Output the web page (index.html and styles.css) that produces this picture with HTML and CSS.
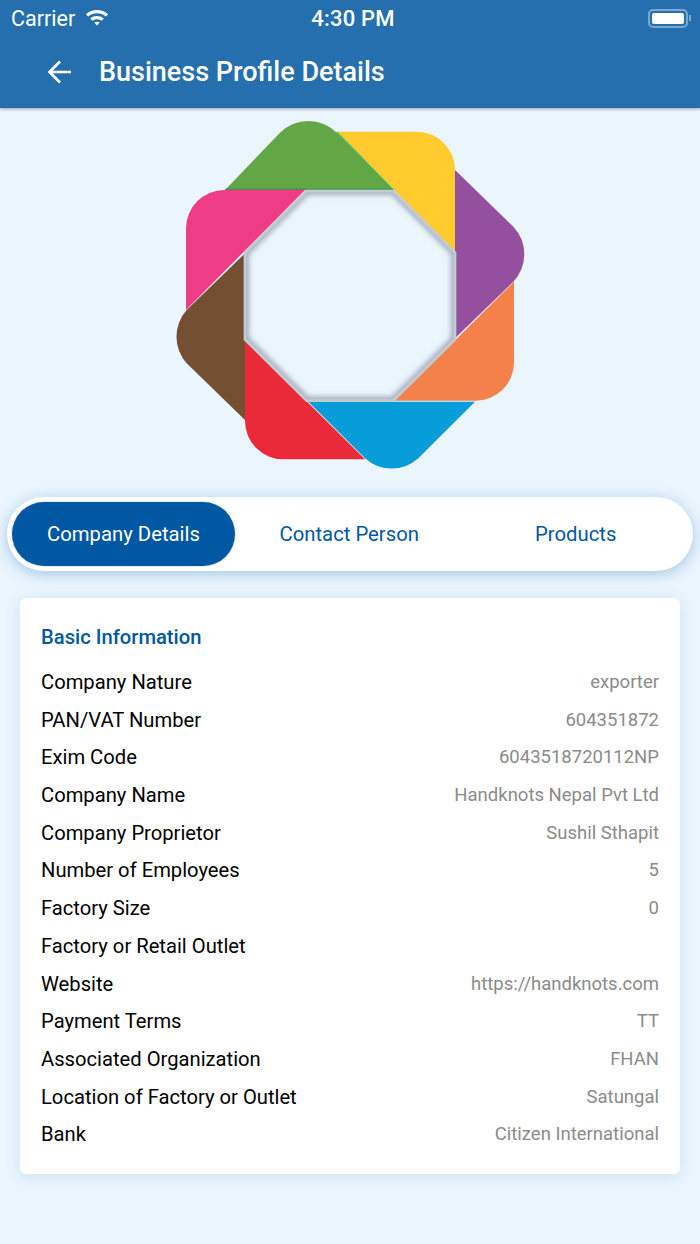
FILE: index.html
```html
<!DOCTYPE html>
<html lang="en">

<head>
  <meta charset="UTF-8" />
  <title>Business Profile Details</title>
  <link rel="stylesheet" href="styles.css">
</head>

<body>
  <header class="top">
    <div class="status">
      <div class="status-left">
        <span>Carrier</span>
        <svg class="wifi" width="24" height="18" viewBox="0 0 24 18">
          <path d="M1 6.200C7.200 .6 16.800 .6 23 6.200l-2.200 2.300C15.800 4.200 8.200 4.200 3.200 8.500z" fill="#fff" />
          <path d="M5.200 10.400c3.900-3.300 9.700-3.300 13.600 0l-2.300 2.300c-2.700-2.100-6.300-2.100-9 0z" fill="#fff" />
          <path d="M9.300 14.600c1.600-1.100 3.800-1.100 5.400 0L12 17.400z" fill="#fff" />
        </svg>
      </div>
      <span class="clock">4:30 PM</span>
      <div class="battery-wrap">
        <div class="battery"><span class="battery-fill"></span></div>
        <span class="battery-nub"></span>
      </div>
    </div>
    <div class="bar">
      <svg class="back" width="28" height="28" viewBox="0 0 28 28">
        <path d="M25 14H4M14 3.500L3.500 14 14 24.500" fill="none" stroke="#fff" stroke-width="2.600" />
      </svg>
      <h1>Business Profile Details</h1>
    </div>
  </header>

  <div class="logo-wrap">
    <svg class="logo" width="370" height="370" viewBox="0 0 1110 1110">
      <defs>
        <filter id="soft" x="-10%" y="-10%" width="120%" height="120%">
          <feGaussianBlur stdDeviation="8" />
        </filter>
        <clipPath id="hole">
          <path d="M425 243H685L870 428V688L685 872H425L240 688V428Z" />
        </clipPath>
      </defs>
      <path d="M515 65H755A115 115 0 0 1 870 180V425Z" fill="#ffcb2d" />
      <path d="M870 180L1045 350A120 120 0 0 1 1045 515L870 685Z" fill="#944f9e" />
      <path d="M1047 515V757A115 115 0 0 1 932 872H688Z" fill="#f5814a" />
      <path d="M930 875L760 1045A120 120 0 0 1 600 1045L430 875Z" fill="#079dd9" />
      <path d="M600 1048H355A115 115 0 0 1 240 933V690Z" fill="#ea2a38" />
      <path d="M240 930L65 760A120 120 0 0 1 65 600L240 430Z" fill="#754f32" />
      <path d="M63 600V355A115 115 0 0 1 178 240H420Z" fill="#ee3c86" />
      <path d="M180 240L345 68A120 120 0 0 1 515 68L685 240Z" fill="#63a646" />
      <path d="M180 238H420" stroke="#d81f78" stroke-width="4" opacity=".5" />
      <path d="M515 66L683 238H180" fill="none" stroke="#12a84a" stroke-width="4" opacity=".7" />
      <g clip-path="url(#hole)">
        <path d="M425 243H685L870 428V688L685 872H425L240 688V428Z" fill="#eaf5fe" />
        <path d="M425 243H685L870 428V688L685 872H425L240 688V428Z" fill="none" stroke="#a8b3bf" stroke-width="26" filter="url(#soft)" />
      </g>
      <path d="M425 243H685L870 428V688L685 872H425L240 688V428Z" fill="none" stroke="#c3cad1" stroke-width="8" />
    </svg>
  </div>

  <nav class="tabs">
    <a class="tab tab-on" href="#">Company Details</a>
    <a class="tab" href="#">Contact Person</a>
    <a class="tab" href="#">Products</a>
  </nav>

  <section class="card">
    <h2>Basic Information</h2>
    <ul class="rows">
      <li><span>Company Nature</span><em>exporter</em></li>
      <li><span>PAN/VAT Number</span><em>604351872</em></li>
      <li><span>Exim Code</span><em>6043518720112NP</em></li>
      <li><span>Company Name</span><em>Handknots Nepal Pvt Ltd</em></li>
      <li><span>Company Proprietor</span><em>Sushil Sthapit</em></li>
      <li><span>Number of Employees</span><em>5</em></li>
      <li><span>Factory Size</span><em>0</em></li>
      <li><span>Factory or Retail Outlet</span><em></em></li>
      <li><span>Website</span><em>https://handknots.com</em></li>
      <li><span>Payment Terms</span><em>TT</em></li>
      <li><span>Associated Organization</span><em>FHAN</em></li>
      <li><span>Location of Factory or Outlet</span><em>Satungal</em></li>
      <li><span>Bank</span><em>Citizen International</em></li>
    </ul>
  </section>
</body>

</html>
```

FILE: styles.css
```css
* {
  margin: 0;
  padding: 0;
  box-sizing: border-box;
}

ul,
li {
  list-style: none;
}

body {
  width: 700px;
  height: 1244px;
  overflow: hidden;
  background-color: #eaf5fe;
  font-family: Roboto, "Liberation Sans", sans-serif;
}

.top {
  height: 108px;
  background-color: #256fae;
  box-shadow: 0 1px 3px rgba(0, 0, 0, .35);
  color: #fff;
}

.status {
  height: 36px;
  padding: 0 9px 0 11px;
  display: flex;
  align-items: center;
  justify-content: space-between;
  font-size: 21.500px;
  position: relative;
}

.status-left {
  display: flex;
  align-items: center;
  gap: 10px;
}

.wifi {
  margin-bottom: 3px;
}

.clock {
  position: absolute;
  left: 6px;
  right: 0;
  text-align: center;
  font-size: 22px;
  font-weight: 500;
  letter-spacing: .2px;
}

.battery-wrap {
  display: flex;
  align-items: center;
  gap: 1px;
}

.battery {
  width: 40px;
  height: 19px;
  padding: 2px;
  border: 2px solid rgba(255, 255, 255, .4);
  border-radius: 5px;
}

.battery-fill {
  display: block;
  height: 100%;
  background-color: #fff;
  border-radius: 2px;
}

.battery-nub {
  width: 2px;
  height: 6px;
  background-color: rgba(255, 255, 255, .4);
}

.bar {
  height: 72px;
  padding-left: 46px;
  display: flex;
  align-items: center;
  gap: 25px;
}

.bar h1 {
  font-size: 27px;
  font-weight: 500;
}

.logo-wrap {
  height: 372px;
  padding-top: 2px;
  display: flex;
  justify-content: center;
}

.tabs {
  width: 686px;
  height: 74px;
  margin: 17px 7px 0;
  padding: 5px;
  display: flex;
  gap: 2px;
  background-color: #fff;
  border-radius: 37px;
  box-shadow: 0 3px 14px rgba(37, 111, 174, .35);
}

.tab {
  flex: 1;
  display: flex;
  align-items: center;
  justify-content: center;
  border-radius: 32px;
  color: #0058a3;
  font-size: 20.300px;
  text-decoration: none;
}

.tab-on {
  flex: 0 0 223px;
  background-color: #0058a3;
  box-shadow: 0 0 0 1px #e4edf5;
  color: #fff;
}

.card {
  width: 660px;
  height: 576px;
  margin: 27px 20px 0;
  padding: 26px 21px 0;
  background-color: #fff;
  border-radius: 6px;
  box-shadow: 0 2px 16px rgba(37, 111, 174, .12);
}

.card h2 {
  height: 26px;
  line-height: 26px;
  color: #0058a3;
  font-size: 20.200px;
  font-weight: 500;
}

.rows {
  margin-top: 13px;
}

.rows li {
  height: 37.730px;
  display: flex;
  align-items: center;
  justify-content: space-between;
  font-size: 20.200px;
  color: #000;
}

.rows em {
  font-style: normal;
  font-size: 18.500px;
  color: #8b8b8b;
}
```
